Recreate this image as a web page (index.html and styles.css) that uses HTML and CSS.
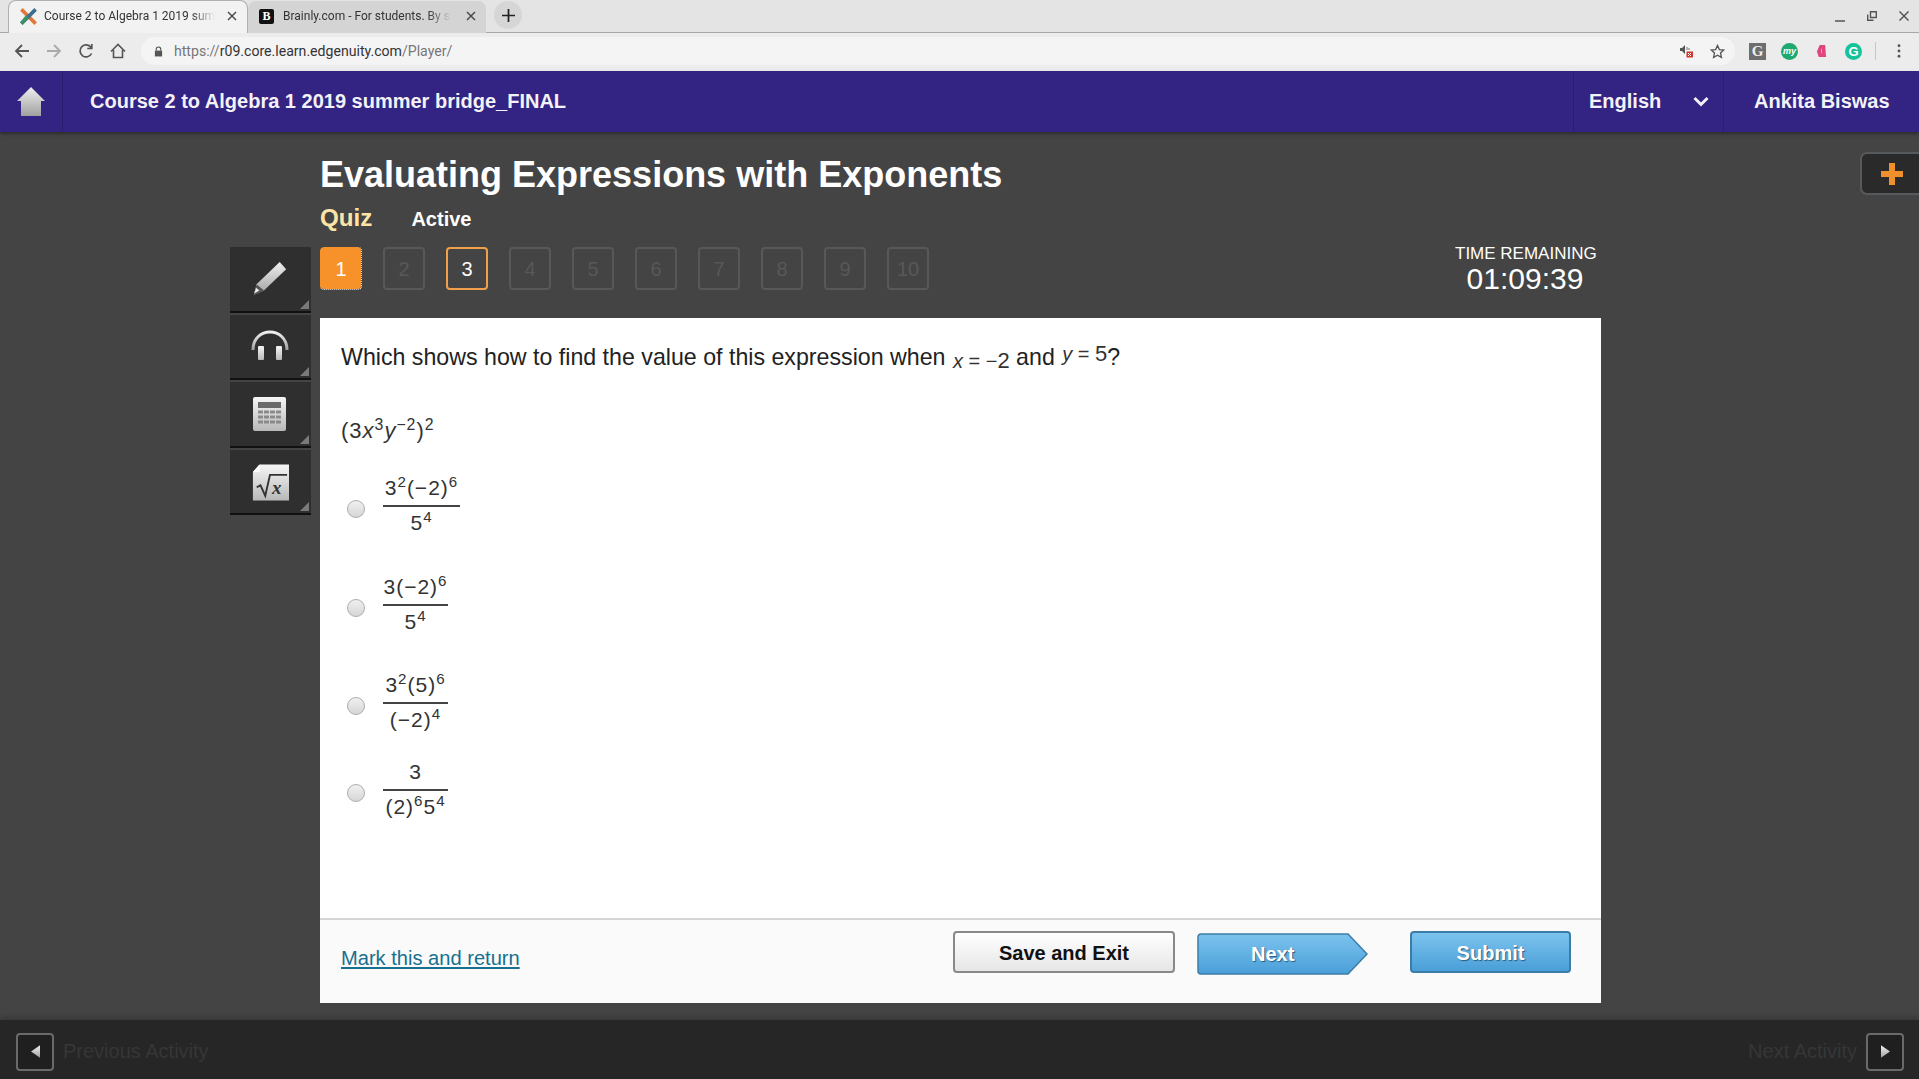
FILE: index.html
```html
<!DOCTYPE html>
<html lang="en">
<head>
<meta charset="utf-8">
<title>Course 2 to Algebra 1 2019 summer bridge_FINAL</title>
<link rel="stylesheet" href="styles.css">
</head>
<body>
<svg class="defs" width="0" height="0" aria-hidden="true">
  <defs>
    <linearGradient id="silver" x1="0" y1="0" x2="0" y2="1">
      <stop offset="0" stop-color="#f0f0f0"/><stop offset="1" stop-color="#a0a0a0"/>
    </linearGradient>
    <linearGradient id="silverpad" x1="0" y1="0" x2="0" y2="1">
      <stop offset="0" stop-color="#f6f6f6"/><stop offset="1" stop-color="#b8b8b8"/>
    </linearGradient>
  </defs>
</svg>

<div class="tabstrip">
  <div class="tab tab-active">
    <svg class="favicon" viewBox="0 0 16 16"><path d="M2 2l12 12" stroke="#e2763a" stroke-width="3"/><path d="M14 2L2 14" stroke="#3a6f8f" stroke-width="3"/><path d="M2 14l5-6" stroke="#3e8f66" stroke-width="3"/></svg>
    <span class="tab-title">Course 2 to Algebra 1 2019 sum</span>
    <svg class="tab-x" viewBox="0 0 10 10"><path d="M1 1l8 8M9 1l-8 8" stroke="#444" stroke-width="1.4"/></svg>
  </div>
  <div class="tab tab-second">
    <span class="brainly">B</span>
    <span class="tab-title">Brainly.com - For students. By st</span>
    <svg class="tab-x" viewBox="0 0 10 10"><path d="M1 1l8 8M9 1l-8 8" stroke="#444" stroke-width="1.4"/></svg>
  </div>
  <div class="newtab"><svg viewBox="0 0 12 12" width="13" height="13"><path d="M6 0v12M0 6h12" stroke="#222" stroke-width="1.6"/></svg></div>
  <div class="winctl">
    <svg viewBox="0 0 10 10" width="10" height="10" class="min"><path d="M0 8h10" stroke="#555" stroke-width="1.5"/></svg>
    <svg viewBox="0 0 10 10" width="10" height="10"><path d="M3.5 .7h5.8v5.8H3.5zM.7 3.5v5.8h5.8" fill="none" stroke="#555" stroke-width="1.4"/></svg>
    <svg viewBox="0 0 10 10" width="10" height="10"><path d="M.5.5l9 9M9.500.5l-9 9" stroke="#555" stroke-width="1.5"/></svg>
  </div>
</div>

<div class="toolbar">
  <div class="navicons">
    <svg viewBox="0 0 16 16" width="16" height="16"><path d="M15 8H2M8 2L2 8l6 6" fill="none" stroke="#555" stroke-width="1.8"/></svg>
    <svg viewBox="0 0 16 16" width="16" height="16"><path d="M1 8h13M8 2l6 6-6 6" fill="none" stroke="#aaa" stroke-width="1.8"/></svg>
    <svg viewBox="0 0 16 16" width="16" height="16"><path d="M13.500 10.500A6 6 0 1 1 13 4.500M13.800 1v4.500H9.300" fill="none" stroke="#555" stroke-width="1.7"/></svg>
    <svg viewBox="0 0 16 16" width="16" height="16"><path d="M1 8.500L8 1.500l7 7M3.500 7v7.500h9V7" fill="none" stroke="#555" stroke-width="1.6"/></svg>
  </div>
  <div class="omnibox">
    <svg class="lock" viewBox="0 0 10 12" width="9" height="11"><path d="M2.500 5V3.500a2.500 2.500 0 0 1 5 0V5" fill="none" stroke="#555" stroke-width="1.300"/><rect x="1" y="5" width="8" height="6.500" fill="#555"/></svg>
    <span class="url"><span class="url-dim">https://</span>r09.core.learn.edgenuity.com<span class="url-dim">/Player/</span></span>
    <svg class="blocked" viewBox="0 0 14 14" width="14" height="14"><path d="M0 4h2l3-3v9L2 7H0z" fill="#555"/><path d="M7 3v3M9 4v2" stroke="#777" stroke-width="1"/><rect x="6.500" y="7.500" width="6.500" height="6" fill="#d0342c"/><path d="M8 9l3 3M11 9l-3 3" stroke="#fff"/></svg>
    <svg class="star" viewBox="0 0 16 16" width="15" height="15"><path d="M8 1.500l2 4.400 4.700.5-3.500 3.200 1 4.700L8 11.900 3.800 14.300l1-4.700L1.300 6.400 6 5.900z" fill="none" stroke="#555" stroke-width="1.400"/></svg>
  </div>
  <div class="exticons">
    <span class="ext-g">G</span>
    <span class="ext-my">my</span>
    <svg class="ext-pink" viewBox="0 0 12 16" width="11" height="15"><path d="M4 1h6l1 13-8 0L1 8z" fill="#e0457f"/><path d="M6 5v5" stroke="#f9b" stroke-width="1"/></svg>
    <span class="ext-gr">G</span>
    <i class="ext-sep"></i>
    <svg viewBox="0 0 4 16" width="4" height="14"><circle cx="2" cy="2" r="1.600" fill="#555"/><circle cx="2" cy="8" r="1.600" fill="#555"/><circle cx="2" cy="14" r="1.600" fill="#555"/></svg>
  </div>
</div>

<header class="apphead">
  <div class="homecell">
    <svg viewBox="0 0 28 29" width="28" height="29"><path d="M14 0l14 14h-4v15H4V14H0z" fill="url(#silver)"/></svg>
  </div>
  <div class="coursename">Course 2 to Algebra 1 2019 summer bridge_FINAL</div>
  <div class="langcell">
    <span>English</span>
    <svg viewBox="0 0 16 11" width="16" height="11"><path d="M1.500 2L8 8.500 14.500 2" fill="none" stroke="#f1f1f6" stroke-width="3"/></svg>
  </div>
  <div class="usercell">Ankita Biswas</div>
</header>

<main class="stage">
  <div class="plus-tab"><svg viewBox="0 0 22 22" width="22" height="22"><path d="M8 0h6v8h8v6h-8v8H8v-8H0V8h8z" fill="#f0902c"/></svg></div>

  <aside class="tools">
    <div class="tool">
      <svg class="ico-pencil" viewBox="0 0 40 40" width="37" height="37"><path d="M31 1l7 8-24 23-11 5 3-12z" fill="url(#silver)"/><path d="M6 25l8 7-11 5z" fill="#555"/><path d="M5.500 29l3.500 3-5.500 3z" fill="#eee"/></svg>
    </div>
    <div class="tool">
      <svg class="ico-phones" viewBox="0 0 38 30" width="38" height="30"><path d="M2 20C2 -4 36 -4 36 20" fill="none" stroke="url(#silver)" stroke-width="3"/><rect x="7" y="16" width="6" height="14" rx="1" fill="url(#silverpad)"/><rect x="25" y="16" width="6" height="14" rx="1" fill="url(#silverpad)"/></svg>
    </div>
    <div class="tool">
      <svg class="ico-calc" viewBox="0 0 33 34" width="33" height="34"><rect width="33" height="34" rx="2" fill="url(#silverpad)"/><rect x="5" y="5" width="23" height="6" fill="#6a6a6a"/><path d="M5 15h23M5 20h23M5 25h23" stroke="#8a8a8a" stroke-width="3" stroke-dasharray="5 1"/></svg>
    </div>
    <div class="tool">
      <svg class="ico-doc" viewBox="0 0 40 40" width="38" height="39"><path d="M9 1h31v38H2V9z" fill="url(#silverpad)"/><path d="M2 9l7-8v8z" fill="#fff"/><path d="M6 25l4-2 5 11 5-22h18" fill="none" stroke="#333" stroke-width="2"/><text class="sqrt-x" x="22" y="32">x</text></svg>
    </div>
  </aside>

  <section class="content">
    <h1 class="lesson">Evaluating Expressions with Exponents</h1>
    <div class="meta"><span class="meta-kind">Quiz</span><span class="meta-state">Active</span></div>
    <div class="navrow">
      <ol class="qnav">
        <li class="q q-current">1</li>
        <li class="q">2</li>
        <li class="q q-answered">3</li>
        <li class="q">4</li>
        <li class="q">5</li>
        <li class="q">6</li>
        <li class="q">7</li>
        <li class="q">8</li>
        <li class="q">9</li>
        <li class="q">10</li>
      </ol>
      <div class="timer">
        <div class="timer-label">TIME REMAINING</div>
        <div class="timer-value">01:09:39</div>
      </div>
    </div>

    <div class="card">
      <div class="card-body">
        <p class="question">Which shows how to find the value of this expression when <span class="im im-low"><i>x</i> = −<b class="im-big">2</b></span> and <span class="im im-high"><i>y</i> = <b class="im-big">5</b></span>?</p>
        <p class="expr">(3<i>x</i><sup>3</sup><i>y</i><sup>−2</sup>)<sup>2</sup></p>
        <div class="opt opt-1">
          <span class="radio"></span>
          <span class="frac"><span class="num">3<sup>2</sup>(−2)<sup>6</sup></span><span class="den">5<sup>4</sup></span></span>
        </div>
        <div class="opt opt-2">
          <span class="radio"></span>
          <span class="frac"><span class="num">3(−2)<sup>6</sup></span><span class="den">5<sup>4</sup></span></span>
        </div>
        <div class="opt opt-3">
          <span class="radio"></span>
          <span class="frac"><span class="num">3<sup>2</sup>(5)<sup>6</sup></span><span class="den">(−2)<sup>4</sup></span></span>
        </div>
        <div class="opt opt-4">
          <span class="radio"></span>
          <span class="frac"><span class="num">3</span><span class="den">(2)<sup>6</sup>5<sup>4</sup></span></span>
        </div>
      </div>
      <footer class="card-foot">
        <a class="mark" href="#">Mark this and return</a>
        <button class="btn btn-save">Save and Exit</button>
        <div class="btn-next">
          <svg viewBox="0 0 171 42" width="171" height="42"><defs><linearGradient id="blue" x1="0" y1="0" x2="0" y2="1"><stop offset="0" stop-color="#7cc3ee"/><stop offset="1" stop-color="#4a9fd8"/></linearGradient></defs><path d="M4 1h147l19 20-19 20H4a3 3 0 0 1-3-3V4a3 3 0 0 1 3-3z" fill="url(#blue)" stroke="#3c7da8" stroke-width="1.500"/></svg>
          <span>Next</span>
        </div>
        <button class="btn btn-submit">Submit</button>
      </footer>
    </div>
  </section>
</main>

<footer class="activitybar">
  <div class="actbtn"><svg viewBox="0 0 10 14" width="9" height="13"><path d="M10 0v14L0 7z" fill="url(#silver)"/></svg></div>
  <span class="actlabel">Previous Activity</span>
  <span class="actlabel actlabel-next">Next Activity</span>
  <div class="actbtn"><svg viewBox="0 0 10 14" width="9" height="13"><path d="M0 0v14l10-7z" fill="url(#silver)"/></svg></div>
</footer>
</body>
</html>
```
FILE: styles.css
```css
* { box-sizing: border-box; }
html, body { margin: 0; padding: 0; }
body {
  width: 1919px;
  height: 1079px;
  overflow: hidden;
  display: flex;
  flex-direction: column;
  background: #444;
  font-family: "Liberation Sans", Arial, sans-serif;
}
.defs { position: absolute; }

/* browser chrome */
.tabstrip {
  height: 33px;
  flex: none;
  display: flex;
  align-items: flex-end;
  padding-left: 8px;
  background: #e4e4e4;
  border-bottom: 1px solid #a8a8a8;
  font-family: Roboto, sans-serif;
  font-size: 12px;
  color: #333;
}
.tab {
  width: 240px;
  height: 32px;
  display: flex;
  align-items: center;
  gap: 6px;
  padding: 0 10px 2px 11px;
  background: #d4d4d4;
  border-radius: 8px 8px 0 0;
  margin-bottom: -1px;
}
.tab-active {
  background: #f2f2f2;
  border: 1px solid #b0b0b0;
  border-bottom: 0;
  height: 33px;
  padding-left: 10px;
}
.tab-second { width: 238px; gap: 9px; }
.favicon { width: 19px; height: 19px; flex: none; }
.brainly {
  width: 15px;
  height: 15px;
  flex: none;
  background: #111;
  color: #fff;
  font: bold 12px/15px "Liberation Serif", serif;
  text-align: center;
  border-radius: 2px;
}
.tab-title {
  flex: 1;
  min-width: 0;
  white-space: nowrap;
  -webkit-mask-image: linear-gradient(90deg, #000 86%, transparent 100%);
  mask-image: linear-gradient(90deg, #000 86%, transparent 100%);
}
.tab-x { width: 10px; height: 10px; flex: none; margin-left: 6px; }
.newtab {
  width: 28px;
  height: 28px;
  margin: 0 0 3px 8px;
  border-radius: 50%;
  background: #d6d6d6;
  display: flex;
  align-items: center;
  justify-content: center;
}
.winctl {
  margin-left: auto;
  height: 32px;
  display: flex;
  align-items: center;
  gap: 22px;
  padding-right: 10px;
}
.winctl .min { margin-top: 3px; }

.toolbar {
  height: 38px;
  flex: none;
  display: flex;
  align-items: center;
  background: #ececec;
  padding-bottom: 2px;
}
.navicons {
  width: 141px;
  display: flex;
  gap: 16px;
  padding-left: 14px;
}
.omnibox {
  width: 1594px;
  height: 28px;
  display: flex;
  align-items: center;
  background: #f4f4f5;
  border-radius: 14px;
  padding: 0 10px 0 13px;
}
.url {
  margin-left: 11px;
  font-family: Roboto, sans-serif;
  font-size: 14.1px;
  color: #333;
}
.url-dim { color: #777; }
.blocked { margin-left: auto; }
.star { margin-left: 16px; }
.exticons {
  flex: 1;
  display: flex;
  align-items: center;
  gap: 15px;
  padding-left: 14px;
}
.ext-g {
  width: 17px;
  height: 17px;
  background: #6e6e6e;
  color: #eee;
  font: bold 15px/17px "Liberation Serif", serif;
  text-align: center;
}
.ext-my {
  width: 17px;
  height: 17px;
  border-radius: 50%;
  background: #1fa971;
  color: #fff;
  font: italic bold 9px/16px "Liberation Sans", sans-serif;
  text-align: center;
}
.ext-pink { margin: 0 3px; }
.ext-gr {
  width: 17px;
  height: 17px;
  border-radius: 50%;
  background: #15c39a;
  color: #fff;
  font: bold 13px/17px "Liberation Sans", sans-serif;
  text-align: center;
}
.ext-sep { width: 1px; height: 18px; background: #c6c6c6; margin: 0 6px 0 -2px; }

/* app header */
.apphead {
  height: 61px;
  flex: none;
  display: flex;
  align-items: stretch;
  background: #332382;
  color: #f3f2f8;
  font-size: 20px;
  font-weight: bold;
  line-height: 60px;
  box-shadow: 0 2px 3px rgba(0,0,0,.35);
  position: relative;
  z-index: 1;
}
.homecell {
  width: 63px;
  display: flex;
  align-items: center;
  justify-content: center;
  padding-right: 1px;
  border-right: 1px solid #2a1c6e;
}
.coursename { flex: 1; padding-left: 27px; }
.langcell {
  width: 151px;
  display: flex;
  align-items: center;
  justify-content: space-between;
  padding: 0 14px 1px 15px;
  border-left: 1px solid #2a1c6e;
  border-right: 1px solid #2a1c6e;
}
.usercell { width: 195px; padding-left: 30px; }

/* stage */
.stage {
  flex: 1;
  min-height: 0;
  position: relative;
  display: flex;
  align-items: flex-start;
  padding-left: 230px;
  gap: 9px;
}
.plus-tab {
  position: absolute;
  top: 20px;
  right: -8px;
  width: 67px;
  height: 43px;
  padding-left: 19px;
  display: flex;
  align-items: center;
  background: #2a2a2a;
  border: 2px solid #565a5c;
  border-radius: 7px;
}
.tools {
  width: 81px;
  margin-top: 115px;
  display: flex;
  flex-direction: column;
  gap: 2px;
}
.tool {
  height: 65.5px;
  display: flex;
  align-items: center;
  justify-content: center;
  padding-right: 2px;
  position: relative;
  background: #2f2f2f;
  border-bottom: 2px solid #111;
}
.ico-pencil { margin-top: 2px; }
.ico-phones { margin-top: -3px; }
.ico-calc { margin-top: 0; }
.ico-doc { margin-top: 3px; }
.tool::after {
  content: "";
  position: absolute;
  right: 2px;
  bottom: 2px;
  border-style: solid;
  border-width: 0 0 9px 9px;
  border-color: transparent transparent #7a7a7a transparent;
}
.content { width: 1281px; }
.lesson {
  margin: 23px 0 0;
  font-size: 36px;
  line-height: 40px;
  font-weight: bold;
  color: #fff;
}
.meta {
  margin-top: 9px;
  height: 26px;
  display: flex;
  align-items: baseline;
  gap: 39px;
  font-weight: bold;
}
.meta-kind { font-size: 24.2px; color: #fde4a6; }
.meta-state { font-size: 20px; color: #fff; }
.navrow {
  margin-top: 17px;
  height: 71px;
  display: flex;
  justify-content: space-between;
  align-items: flex-start;
}
.qnav {
  list-style: none;
  margin: 0;
  padding: 0;
  display: flex;
  gap: 21px;
}
.q {
  width: 42px;
  height: 43px;
  display: flex;
  align-items: center;
  justify-content: center;
  padding-top: 1px;
  border: 2px solid #585858;
  border-radius: 4px;
  color: #585858;
  font-size: 20px;
}
.q-current {
  background: #f7922b;
  background-clip: padding-box;
  border-width: 0 1px 1px 0;
  border-style: dotted;
  border-color: #e8e8e8;
  color: #fff;
  padding: 2px 0 0 1px;
}
.q-answered { border-color: #f0a04b; color: #fff; }
.timer {
  width: 140px;
  margin: -3px 6px 0 0;
  text-align: center;
  color: #fff;
}
.timer-label { font-size: 17px; line-height: 20px; white-space: nowrap; }
.timer-value { font-size: 30px; line-height: 32px; margin-top: -1px; }

/* card */
.card {
  height: 685px;
  display: flex;
  flex-direction: column;
  background: #fff;
}
.card-body { flex: 1; padding: 24px 21px 0; color: #222; position: relative; }
.question {
  margin: 0;
  font-size: 23.2px;
  line-height: 30px;
  color: #222;
}
.im { font-size: 20px; white-space: nowrap; color: #333; margin-left: 1px; }
.im-big { font-weight: normal; font-size: 22px; }
.im-low { position: relative; top: 3px; }
.im-high { position: relative; top: -4px; }
.expr {
  margin: 43px 0 0;
  font-size: 22px;
  letter-spacing: 1px;
  line-height: 30px;
  color: #333;
}
sup { font-size: .72em; line-height: 0; }
.opt {
  display: flex;
  align-items: center;
  padding-left: 6px;
  gap: 18px;
}
.opt-1 { margin-top: 27px; }
.opt-2 { margin-top: 34px; }
.opt-3 { margin-top: 33px; }
.opt-4 { margin-top: 22px; }
.radio {
  width: 18px;
  height: 18px;
  flex: none;
  border-radius: 50%;
  border: 1px solid #adadad;
  background: linear-gradient(#f0f0f0, #d6d6d6);
  margin-top: 6px;
}
.frac {
  width: 65px;
  display: inline-flex;
  flex-direction: column;
  align-items: stretch;
  text-align: center;
  font-size: 21px;
  letter-spacing: 1px;
  line-height: 30px;
  color: #333;
  white-space: nowrap;
}
.opt-1 .frac { width: 77px; }
.num { padding-bottom: 2px; border-bottom: 2px solid #444; }
.den { padding-top: 1px; }

.card-foot {
  height: 85px;
  flex: none;
  display: flex;
  align-items: flex-start;
  background: #fafafa;
  border-top: 2px solid #d6d6d6;
  padding: 11px 0 0 21px;
}
.mark {
  margin: 14px auto 0 0;
  font-size: 20.1px;
  line-height: 26px;
  color: #17708f;
}
.btn {
  height: 42px;
  font-family: inherit;
  font-size: 20px;
  font-weight: bold;
  border-radius: 4px;
  padding: 2px 0 0;
}
.btn-save {
  width: 222px;
  margin-right: 22px;
  color: #111;
  background: linear-gradient(#fff, #e6e6e6);
  border: 2px solid #888;
}
.btn-next {
  width: 171px;
  height: 42px;
  margin: 2px 42px 0 0;
  position: relative;
  color: #fff;
  font-size: 20px;
  font-weight: bold;
  text-shadow: 1px 1px 1px #2b5d80;
}
.btn-next svg { display: block; }
.btn-next span {
  position: absolute;
  left: 54px;
  top: 8px;
  line-height: 26px;
}
.btn-submit {
  width: 161px;
  margin-right: 30px;
  color: #fff;
  text-shadow: 1px 1px 1px #2b5d80;
  background: linear-gradient(#7cc3ee, #4a9fd8);
  border: 2px solid #3c7da8;
}

/* bottom bar */
.activitybar {
  height: 59px;
  flex: none;
  display: flex;
  align-items: center;
  gap: 9px;
  padding: 4px 15px 0 16px;
  background: #262626;
  box-shadow: 0 -3px 5px rgba(0,0,0,.18);
  font-size: 20px;
  color: #363636;
}
.actbtn {
  width: 38px;
  height: 38px;
  display: flex;
  align-items: center;
  justify-content: center;
  background: #1f1f1f;
  border: 2px solid #6a6a6a;
  border-radius: 4px;
}
.actlabel-next { margin-left: auto; }
.sqrt-x { font: italic bold 20px "Liberation Serif", serif; fill: #333; }
```
